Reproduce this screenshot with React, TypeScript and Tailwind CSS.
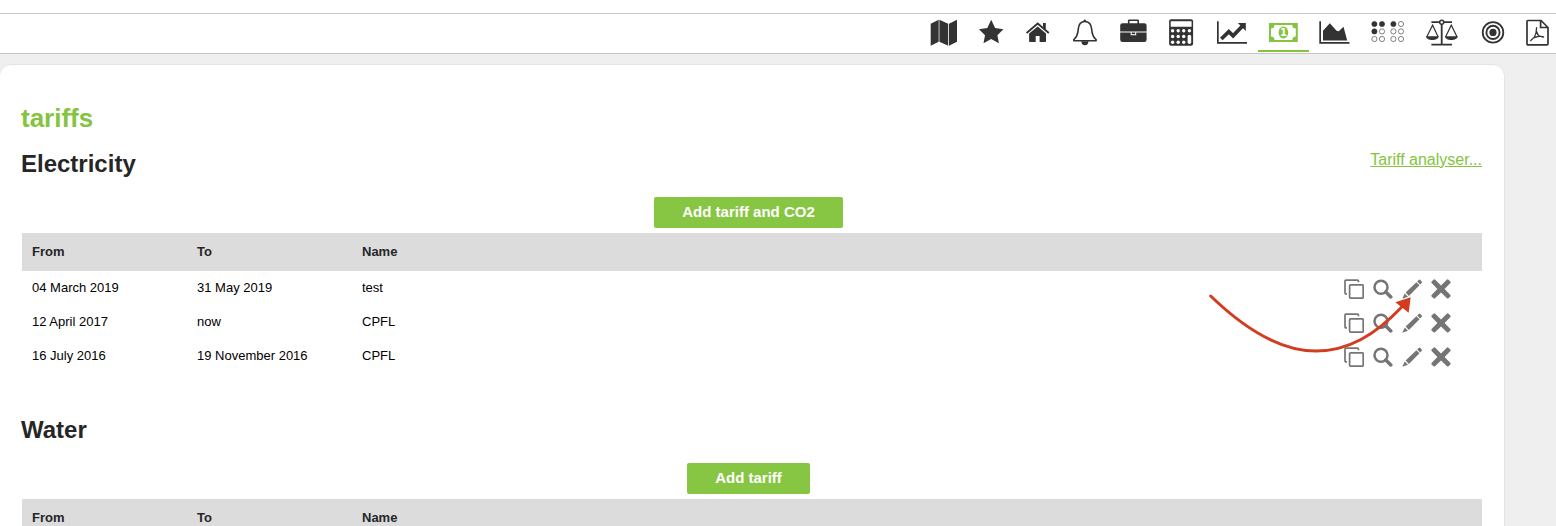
import React from "react";

interface Tariff {
  from: string;
  to: string;
  name: string;
}

interface SectionProps {
  title: string;
  addLabel: string;
  tariffs: Tariff[];
  analyser?: boolean;
  children?: React.ReactNode;
}

const electricity: Tariff[] = [
  { from: "04 March 2019", to: "31 May 2019", name: "test" },
  { from: "12 April 2017", to: "now", name: "CPFL" },
  { from: "16 July 2016", to: "19 November 2016", name: "CPFL" },
];

// all toolbar icons share a height of 28, only the width differs
const navItems: { label: string; width: number; active?: boolean; icon: React.ReactNode }[] = [
  {
    label: "Map",
    width: 27,
    icon: <path d="M.7 4.7l8-4v22l-8 4zM9.4.7l8.8 4v22l-8.8-4zM19 4.7l8-4v22l-8 4z" />,
  },
  {
    label: "Favourites",
    width: 25,
    icon: <path d="M12.2.8l3.9 8.3 8.3 1.1-6 6 1.5 8.1-7.7-4.3-7.7 4.3L6 16.2l-6-6 8.3-1.1z" />,
  },
  {
    label: "Home",
    width: 25,
    icon: (
      <>
        <path d="M11.7 7.4l8.3 7v7.8q0 .8-.8.8h-5.6v-6H9.7v6H3.900q-.8 0-.8-.8v-7.8z" />
        <path d="M.6 13.9L11.7 4.6l11.1 9.3" fill="none" stroke="currentColor" strokeWidth="1.9" />
        <path d="M17 4h2.800v6.700L17 8.200z" />
      </>
    ),
  },
  {
    label: "Alarms",
    width: 25,
    icon: (
      <>
        <path
          d="M11.8 2.5c-4.1 0-6.1 3-6.500 7.400-.4 5.200-1.200 8.200-4.500 10.800v1h22.300v-1c-3.300-2.600-4.100-5.600-4.500-10.800C18.200 5.500 15.900 2.500 11.800 2.500z"
          fill="none"
          stroke="currentColor"
          strokeWidth="1.6"
          strokeLinejoin="round"
        />
        <path d="M10.300 2.500a1.500 1.900 0 013 0zM8.400 22.300h7a3.500 3.900 0 01-7 0z" />
      </>
    ),
  },
  {
    label: "Portfolio",
    width: 27,
    icon: (
      <>
        <path d="M8.700 5V1.800q0-.5.500-.5h8.500q.5 0 .5.500V5" fill="none" stroke="currentColor" strokeWidth="1.600" />
        <path d="M2.500 4.200h21.800q2.300 0 2.300 2.300v6.100H.2V6.500q0-2.300 2.300-2.300z" />
        <path d="M.2 13.500h10.500v2.800h5.500v-2.800h10.400v7.200q0 2.300-2.300 2.300H2.500Q.2 23 .2 20.700z" />
        <path d="M11.700 13.500h3.500v1.700h-3.500z" />
      </>
    ),
  },
  {
    label: "Calculator",
    width: 26,
    icon: (
      <>
        <rect x=".1" y=".3" width="24" height="26.500" rx="2" />
        <g fill="white">
          <rect x="1.700" y="2.300" width="20.900" height="5.500" rx=".5" />
          <circle cx="3.600" cy="11.700" r="1.700" />
          <circle cx="9.200" cy="11.700" r="1.700" />
          <circle cx="14.700" cy="11.700" r="1.700" />
          <circle cx="20.400" cy="11.700" r="1.700" />
          <circle cx="3.600" cy="17.500" r="1.700" />
          <circle cx="9.200" cy="17.500" r="1.700" />
          <circle cx="14.700" cy="17.500" r="1.700" />
          <circle cx="3.600" cy="23.300" r="1.700" />
          <circle cx="9.200" cy="23.300" r="1.700" />
          <circle cx="14.700" cy="23.300" r="1.700" />
          <rect x="18.600" y="15.700" width="3.600" height="9.400" rx="1.800" />
        </g>
      </>
    ),
  },
  {
    label: "Trends",
    width: 30,
    icon: (
      <>
        <path d="M0 2.300h1.700v20.800H30v1.700H0z" />
        <path d="M4.300 20l7.500-7.400 4.300 4.200 9.400-9.800" fill="none" stroke="currentColor" strokeWidth="3.800" />
        <path d="M20.800 4h8v8z" />
      </>
    ),
  },
  {
    label: "Tariffs",
    width: 29,
    active: true,
    icon: (
      <>
        <path d="M0 4h28.800v19H0z" />
        <path d="M5.500 6h17.800q0 3.500 3.500 3.500v8q-3.500 0-3.500 3.500H5.500Q5.500 17.500 2 17.500v-8Q5.500 9.500 5.500 6z" fill="white" />
        <ellipse cx="14.400" cy="13.500" rx="4.800" ry="5.900" />
        <text x="14.400" y="17" textAnchor="middle" fill="white" className="font-['DejaVu_Sans',sans-serif] text-[10px] font-bold">
          1
        </text>
      </>
    ),
  },
  {
    label: "Profiles",
    width: 29,
    icon: (
      <>
        <path d="M-.7 2.300H1v20.800h28.500v1.700H-.7z" />
        <path d="M3 21.500v-9.700l6.800-7.500 6.800 7.500 2.200.5 4.700-4.500 3.700 13.700z" />
      </>
    ),
  },
  {
    label: "Matrix",
    width: 33,
    icon: (
      <>
        {[3.4, 11, 22.4, 30].map((cx, col) =>
          [5, 12.4, 20].map((cy, row) => (
            <circle
              key={`${col}-${row}`}
              cx={cx}
              cy={cy}
              r="2.600"
              fill={(row === 0 && col < 3) || (row === 1 && col === 0) ? "currentColor" : "none"}
              stroke="currentColor"
              strokeWidth=".6"
            />
          ))
        )}
      </>
    ),
  },
  {
    label: "Compare",
    width: 34,
    icon: (
      <>
        <path d="M5.400 3.200H26M15.700 4v21.500M5.400 25.600H26" fill="none" stroke="currentColor" strokeWidth="1.800" />
        <circle cx="15.700" cy="3.200" r="2" fill="white" stroke="currentColor" strokeWidth="1.500" />
        <path d="M.7 18L6.600 6.200 12.200 18M19.500 18L25.300 6.200 31.100 18" fill="none" stroke="currentColor" strokeWidth="1.200" />
        <path d="M0 17.300h12.700c0 5-12.700 5-12.700 0zM19 17.300h12.700c0 5-12.700 5-12.700 0z" />
      </>
    ),
  },
  {
    label: "Targets",
    width: 22,
    icon: (
      <>
        <circle cx="11" cy="13.400" r="10.300" fill="none" stroke="currentColor" strokeWidth="1.800" />
        <circle cx="11" cy="13.400" r="6.600" fill="none" stroke="currentColor" strokeWidth="1.900" />
        <circle cx="11" cy="13.400" r="3.600" />
      </>
    ),
  },
  {
    label: "Reports",
    width: 23,
    icon: (
      <>
        <path
          d="M2 1.500h13l7 7v16.200q0 1.100-1.100 1.100H2q-1 0-1-1V2.500q0-1 1-1zM14.600 1.500v7H22"
          fill="none"
          stroke="currentColor"
          strokeWidth="1.700"
        />
        <path
          d="M4.700 21.500L8.300 18.200C10 15.500 10.600 13 10.600 8.600M10.600 12.500C11.200 14.800 12 16 13.400 17.200L17.600 18M8.300 18.500l5.300-1.300"
          fill="none"
          stroke="currentColor"
          strokeWidth="1.300"
          strokeLinecap="round"
        />
      </>
    ),
  },
];

const rowActions = [
  {
    label: "Copy",
    icon: (
      <g fill="none" stroke="currentColor" strokeWidth="1.700">
        <rect x="5.600" y="5.900" width="13.600" height="13.200" rx="1" />
        <path d="M3 14.800h-1q-1 0-1-1V2.200q0-1 1-1h11.500q1 0 1 1v1" />
      </g>
    ),
  },
  {
    label: "View",
    icon: (
      <g fill="none" stroke="currentColor">
        <circle cx="8" cy="8.200" r="6.500" strokeWidth="2.500" />
        <path d="M12.800 13l5 4.900" strokeWidth="3.500" strokeLinecap="round" />
      </g>
    ),
  },
  {
    label: "Edit",
    icon: (
      <path d="M15.200 2.400l1.500-1.500q.8-.6 1.600.1l1.300 1.300q.7.800 0 1.600l-1.500 1.500zM14.400 3.200l3.100 3.100L6.900 16.900 3.600 13.600zM2.700 14.500l3.300 3.300L.3 19.700z" />
    ),
  },
  {
    label: "Delete",
    icon: (
      <path d="M4 .6L10 6.600 16 .6q.8-.5 1.500.1l1.900 1.900q.6.8 0 1.500l-5.800 5.900 5.800 5.900q.6.8 0 1.500l-1.900 1.900q-.8.600-1.500 0L10 13.400 4 19.300q-.8.600-1.500 0L.6 17.400q-.6-.8 0-1.500L6.400 10 .6 4.100Q0 3.300.6 2.600L2.500.7Q3.200.1 4 .6z" />
    ),
  },
];

const TariffSection = ({ title, addLabel, tariffs, analyser, children }: SectionProps) => (
  <section>
    <div className="flex items-start justify-between">
      <h2 className="text-2xl leading-7 font-bold">{title}</h2>
      {analyser && (
        <a href="#analyser" className="text-base leading-5 text-[#84c440] underline">
          Tariff analyser...
        </a>
      )}
    </div>

    <div className="mt-[19px] flex justify-center pr-[6px]">
      <button className="h-[31px] rounded-xs bg-[#86c642] px-7 text-[15px] font-bold text-white">{addLabel}</button>
    </div>

    <div className="relative mt-[5px] pl-px">
      <table className="w-full table-fixed border-collapse text-left text-[13px]">
        <thead className="bg-[#dcdcdc]">
          <tr className="h-[38px]">
            <th className="w-[165px] pl-[10px]">From</th>
            <th className="w-[165px] pl-[10px]">To</th>
            <th className="pl-[10px]">Name</th>
            <th className="w-[150px]" />
          </tr>
        </thead>
        <tbody className="text-black">
          {tariffs.map((t) => (
            <tr key={t.from} className="h-[34px]">
              <td className="p-0 pl-[10px]">{t.from}</td>
              <td className="p-0 pl-[10px]">{t.to}</td>
              <td className="p-0 pl-[10px]">{t.name}</td>
              <td className="p-0 pt-px pr-[31px]">
                <div className="flex justify-end gap-[9px] text-[#757575]">
                  {rowActions.map((action) => (
                    <button key={action.label} aria-label={action.label}>
                      <svg viewBox="0 0 20 20" fill="currentColor" className="size-5">
                        {action.icon}
                      </svg>
                    </button>
                  ))}
                </div>
              </td>
            </tr>
          ))}
        </tbody>
      </table>
      {children}
    </div>
  </section>
);

export default function App() {
  return (
    <div className="h-screen overflow-hidden bg-[#efefef] font-['Liberation_Sans',Arial,sans-serif] text-[#262626]">
      <header className="bg-white pt-[13px]">
        <nav className="flex h-[41px] justify-end overflow-hidden border-y border-[#c6c6c6]">
          <div className="-mr-1 flex">
            {navItems.map((item) => (
              <a
                key={item.label}
                href="#"
                aria-label={item.label}
                className={`h-[38px] border-b-2 px-[11px] pt-[5px] ${
                  item.active ? "border-[#84c440] text-[#84c440]" : "border-transparent text-[#333333]"
                }`}
              >
                <svg width={item.width} height="28" viewBox={`0 0 ${item.width} 28`} fill="currentColor" className="overflow-visible">
                  {item.icon}
                </svg>
              </a>
            ))}
          </div>
        </nav>
      </header>

      <main className="pt-[10px] pr-[51px]">
        <div className="-ml-px rounded-xl border border-[#e4e4e4] bg-white pt-[38px] pr-[22px] pb-10 pl-[21px]">
          <h1 className="mb-[17px] text-[26px] leading-[30px] font-bold text-[#84c440]">tariffs</h1>

          <div className="flex flex-col gap-[43px]">
            <TariffSection title="Electricity" addLabel="Add tariff and CO2" tariffs={electricity} analyser>
              {/* arrow pointing at the edit icon of the first row */}
              <svg viewBox="0 0 900 330" className="pointer-events-none absolute top-[37px] -right-2 h-[110px] w-[300px]">
                <path
                  d="M62 78C180 192 285 243 377 243C475 243 555 195 636 110"
                  fill="none"
                  stroke="#d23c20"
                  strokeWidth="9"
                  strokeLinecap="round"
                />
                <path d="M616 97L662 82L656 128z" fill="#d23c20" />
              </svg>
            </TariffSection>
            <TariffSection title="Water" addLabel="Add tariff" tariffs={[]} />
          </div>
        </div>
      </main>
    </div>
  );
}
